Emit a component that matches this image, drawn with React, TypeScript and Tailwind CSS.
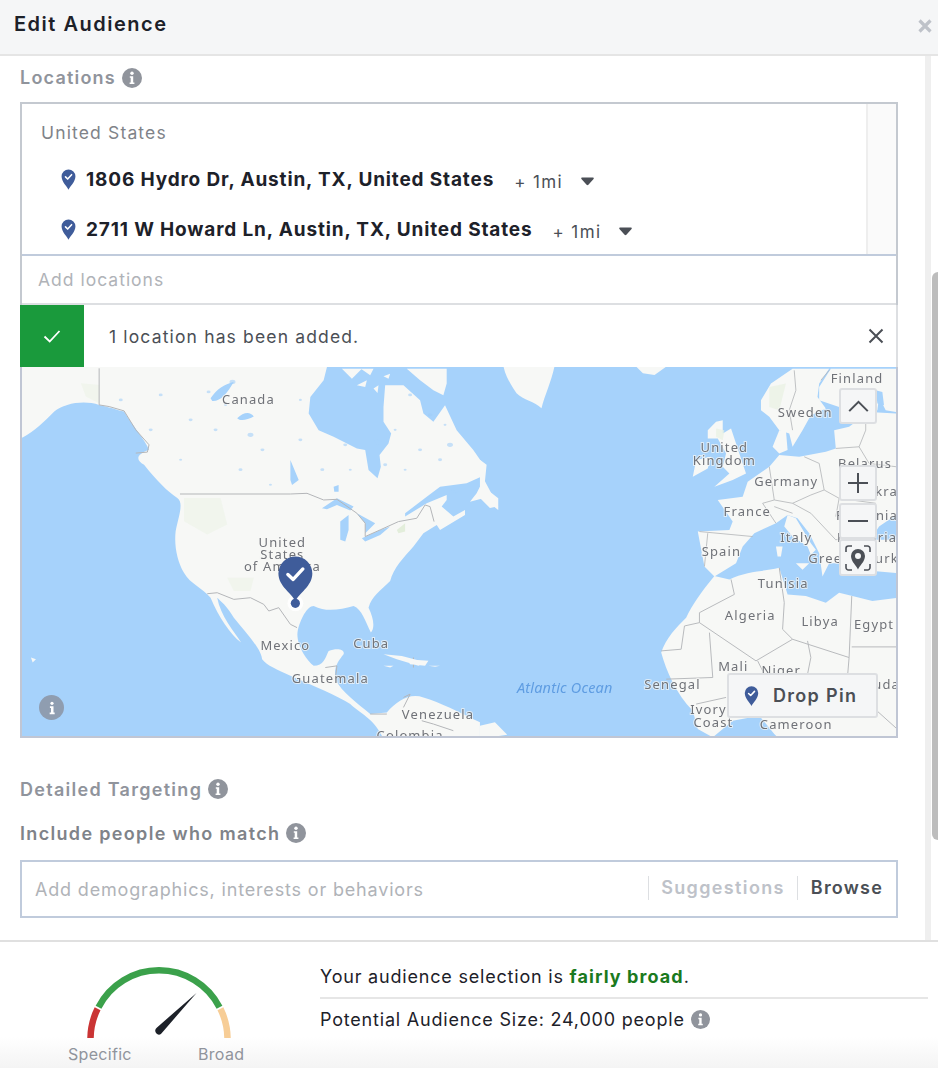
import React from "react";

const font = { fontFamily: "Inter, 'Liberation Sans', sans-serif" };

function Info({ className = "" }: { className?: string }) {
  return (
    <svg viewBox="0 0 20 20" className={className}>
      <circle cx="10" cy="10" r="10" fill="#90949c" />
      <circle cx="10" cy="5.2" r="1.7" fill="#fff" />
      <path d="M7.8 8.2h3.4v6.2h1.2v1.6H7.6v-1.6h1.1V9.8h-.9z" fill="#fff" />
    </svg>
  );
}

function Pin({ className = "" }: { className?: string }) {
  return (
    <svg viewBox="0 0 16 22" className={className}>
      <path d="M8 22C6.6 18.6 0.6 13.6 0.6 7.6A7.4 7.4 0 0 1 15.400 7.6C15.400 13.6 9.4 18.6 8 22Z" fill="#3f5c9a" />
      <path d="M4.8 8.2l2.3 2.3 4.2-4.6" fill="none" stroke="#fff" strokeWidth="1.7" strokeLinecap="round" strokeLinejoin="round" />
    </svg>
  );
}

function Caret() {
  return (
    <svg viewBox="0 0 16 10" className="w-[15px] h-[9px]">
      <path d="M1 1.5C1 .8 1.5.5 2 .5h12c.5 0 1 .3 1 1 0 .4-.2.7-.5 1L9 8.6c-.6.6-1.4.6-2 0L1.5 2.500C1.2 2.200 1 1.900 1 1.500Z" fill="#4b4f56" />
    </svg>
  );
}

function LocationRow({ text, y }: { text: string; y: string }) {
  return (
    <div className={`flex items-center pl-[39px] ${y}`}>
      <Pin className="w-[15px] h-[21px] mr-[10px] -mt-[3px]" />
      <span className="text-[19px] leading-[24px] font-bold text-[#1d2129] tracking-[0.85px] -mt-[3px]">{text}</span>
      <span className="ml-[20px] text-[17px] leading-[24px] text-[#4b4f56] tracking-[1.4px] mt-[1px]">+ 1mi</span>
      <span className="ml-[17px] flex items-center mt-[1px]"><Caret /></span>
    </div>
  );
}

function Label({ x, y, children, size = 13 }: { x: number; y: number; children: string; size?: number }) {
  return (
    <text x={x} y={y} textAnchor="middle" fontSize={size} letterSpacing="1.15" fill="#6f7278" fontFamily="'Noto Sans', sans-serif" stroke="#f8f8f6" strokeOpacity="0.7" strokeWidth="2" paintOrder="stroke">
      {children}
    </text>
  );
}

const lakes: [number, number, number][] = [
  [208, 392, 2], [232, 382, 3], [190, 420, 2], [160, 395, 2], [215, 430, 2], [250, 435, 3], [262, 450, 2],
  [120, 400, 2], [150, 430, 2], [300, 400, 1.5], [300, 440, 2], [322, 470, 2], [350, 470, 1.5], [410, 395, 2],
  [430, 415, 2.500], [395, 430, 1.5], [450, 445, 3], [420, 450, 2], [385, 465, 2], [405, 470, 1.5], [445, 425, 1.5],
  [345, 445, 2], [180, 460, 1.5], [240, 470, 2], [270, 485, 1.5], [440, 460, 2], [225, 405, 1.5],
];

function WorldMap() {
  const land = "#f7f8f6";
  const water = "#a6d2fb";
  const line = "#b4b6b9";
  const blue = "#9fcdf9";
  return (
    <svg viewBox="21 367 876 370" className="absolute inset-0 w-full h-full blur-[0.5px]" preserveAspectRatio="none">
      <rect x="21" y="367" width="876" height="370" fill={water} />
      {/* Americas */}
      <g transform="translate(20 365) scale(0.33333)">
        <path fill={land} d="M0 0L920 0L920 6L910 46L870 96L865 146L895 196L940 216L1010 251L1035 256L1045 316L1072 341L1082 306L1078 271L1105 236L1113 206L1090 171L1090 126L1095 61L1150 61L1200 106L1210 146L1240 171L1275 121L1310 196L1360 256L1395 306L1395 331L1340 356L1260 366L1220 396L1155 446L1155 456L1220 416L1280 391L1280 406L1265 426L1300 456L1335 436L1335 451L1260 496L1250 481L1210 506L1180 546C1150 580 1120 610 1110 650C1080 680 1055 695 1045 730C1060 760 1065 790 1052 805C1035 770 1025 735 1000 725C960 735 920 745 880 725C860 725 840 765 832 800C825 840 860 890 880 905C910 905 915 880 925 860C950 850 975 855 970 870C955 890 940 905 945 945C965 985 1010 1015 1050 1050L1100 1045C1130 1010 1170 985 1210 1000C1260 1015 1320 1045 1380 1075L1380 1125L1090 1125C1060 1060 1020 1050 990 1020C950 995 880 965 810 935C770 915 740 905 725 885C720 850 680 810 640 760C620 725 600 710 590 700C600 755 640 800 662 835C630 810 595 760 570 700C545 670 510 660 490 625C470 590 460 545 465 500C475 450 490 415 470 400C440 380 410 350 370 300C345 285 345 270 385 255C370 220 340 190 310 140C290 135 260 125 235 120C190 105 130 115 100 140C70 170 40 200 5 218L0 218Z" />
        <path fill={water} d="M570 100C590 70 610 60 640 50C620 85 600 110 575 108ZM650 160C670 140 690 140 700 155C680 165 660 170 650 160Z" />
        <path fill="#e8f1e2" opacity="0.45" d="M180 55L235 60L235 115L195 95ZM490 400L600 400L620 480L560 510L490 470ZM620 640L700 640L690 680L640 680Z" />
        <path fill="none" stroke={line} strokeWidth="3" d="M235 10L235 120L265 125L310 138L345 195L385 240L380 262L345 265M478 388L810 388M560 688L590 685L640 705L690 700L730 720L745 740L775 730L810 780L830 790M915 910L950 905L945 945M1150 1000L1170 990L1150 1030M1180 880L1180 910M1205 1070L1240 1080L1300 1100M1050 1050L1100 1050" />
        <path fill={land} d="M1090 870L1145 875L1220 895L1195 905L1130 885ZM1160 885L1225 890L1215 905L1170 900ZM1090 905L1120 905L1110 910ZM1225 905L1260 905L1245 908ZM30 880L45 885L35 895Z" />
      </g>
      {/* Eastern Canada detail */}
      <g transform="translate(290 367) scale(0.33333)">
        <path fill={land} d="M155 5L215 5L185 35ZM212 5L250 5L240 25ZM200 55L230 40L225 60ZM250 65L265 55L262 78ZM280 28L300 20L295 35ZM350 5L470 5L470 50L460 85L430 70L390 40ZM585 330L560 380L540 405L580 395L625 430L625 395L600 375L575 370Z" />
        <path fill={water} d="M95 425L140 395L190 420L180 432L140 415L110 428ZM150 520L150 465L175 445L175 490L165 525ZM200 440L255 470L225 500L225 470ZM215 515L270 490L300 480L270 505L225 525ZM0 280L25 340L5 355L0 340ZM130 360L145 355L145 375L132 375ZM470 365L505 375L495 380ZM250 215L275 225L260 235Z" />
        <path fill="#e3eedb" d="M320 490L345 470L345 495L325 500Z" />
        <path fill="none" stroke={line} strokeWidth="3" d="M0 382L50 380L100 400L140 398L200 440L225 470L225 510L270 490L325 465L380 455L405 415L420 420L432 465" />
      </g>
      {/* Africa */}
      <g transform="translate(480 365) scale(0.33333)">
        <path fill={land} d="M70 0L225 0C215 50 195 90 185 130C165 110 130 105 110 85C90 55 75 30 70 0ZM470 5L560 5L525 30L490 25ZM0 285L20 300L15 350L55 425L30 430L0 400ZM0 1085L45 1075L82 1112L0 1125Z" />
        <path fill={land} d="M705 635C660 690 640 720 620 760C590 790 560 820 545 865C560 920 590 990 640 1040L655 1095L700 1120L760 1070L840 1055L885 1110L900 1125L1260 1125L1260 700L1180 710L1120 695L1080 685L1040 715L980 695L925 690L900 610C860 620 800 620 750 645Z" />
        <path fill="none" stroke={line} strokeWidth="2.8" d="M755 645L765 690L660 745L660 775L830 890L940 825L1110 880L1118 695M660 775L615 785L605 855L545 860M690 805L700 940L560 945M940 825L910 795L915 715L900 610M985 830L995 880L985 930M1118 848L1260 848M1110 880L1100 1000M835 890L850 920M650 1020L740 1000M1160 1010L1260 1100" />
      </g>
      {/* Europe */}
      <g transform="translate(680 367) scale(0.33333)">
        <path fill={land} d="M245 100L275 50L340 5L450 5L420 50L415 90L440 125L395 145L370 190L340 240L330 200L300 190L270 150L245 130Z" />
        <path fill={land} d="M455 5L651 5L651 135L620 130L600 90L595 130L500 170L480 120L420 100L420 60Z" />
        <path fill={land} d="M300 190L320 190L325 250L300 260L280 240Z" />
        <path fill={land} d="M115 400L190 390L205 345L270 300L300 265L360 270L440 255L470 245L465 190L510 180L570 135L651 140L651 445L600 480L575 520L651 520L651 620L540 610L490 590L450 590L430 630L420 560L390 500L355 455L325 445L290 470L225 500L190 540L170 590L105 630L75 600L55 495L150 490L160 465Z" />
        <path fill={land} d="M325 445L350 455L395 530L410 550L395 565L385 540L340 510L315 480Z" />
        <path fill={land} d="M350 590L390 590L370 610ZM290 540L310 540L305 570L295 570ZM85 190L110 165L130 160L130 200L155 185L190 290L200 320L160 340L105 360L150 320L130 300L140 260L115 215L85 215ZM50 280L95 270L85 305L40 330Z" />
        <path fill={water} d="M300 505L330 530L320 540ZM590 70L610 75L615 115L595 110ZM420 190L435 180L425 205Z" />
        <path fill="#e8f1e2" opacity="0.7" d="M270 60L320 50L300 130L270 120ZM110 185L135 190L130 220L110 210Z" />
        <path fill="none" stroke={line} strokeWidth="2.5" d="M345 10L350 70L330 130L340 190M450 10L425 40M270 300L285 400L340 410L395 385L435 370L420 290L375 270M470 245L540 240L560 190L560 135M540 240L570 290L651 300M435 370L480 395L590 410M395 440L470 520L540 500M60 495L220 510M285 420L340 440M75 600L85 500M285 400L250 410L290 470M340 410L395 440M480 395L470 450" />
      </g>
      <g fill={blue} opacity="0.55">
        {lakes.map(([x, y, r], i) => (
          <ellipse key={i} cx={x} cy={y} rx={r} ry={r * 0.7} />
        ))}
      </g>
      <g>
        <Label x={248} y={404}>Canada</Label>
        <Label x={282} y={547}>United</Label>
        <Label x={282} y={560}>States</Label>
        <Label x={282} y={572}>of America</Label>
        <Label x={285} y={651}>Mexico</Label>
        <Label x={371} y={649}>Cuba</Label>
        <Label x={330} y={684}>Guatemala</Label>
        <Label x={438} y={720}>Venezuela</Label>
        <Label x={410} y={741}>Colombia</Label>
        <Label x={858} y={383}>Finland</Label>
        <Label x={806} y={417}>Sweden</Label>
        <Label x={725} y={452}>United</Label>
        <Label x={725} y={465}>Kingdom</Label>
        <Label x={787} y={486}>Germany</Label>
        <Label x={748} y={516}>France</Label>
        <Label x={866} y={468}>Belarus</Label>
        <Label x={889} y={496}>Ukrain</Label>
        <Label x={868} y={520}>Romania</Label>
        <Label x={797} y={542}>Italy</Label>
        <Label x={868} y={542}>Bulgaria</Label>
        <Label x={834} y={564}>Greece</Label>
        <Label x={892} y={564}>Turkey</Label>
        <Label x={722} y={557}>Spain</Label>
        <Label x={784} y={589}>Tunisia</Label>
        <Label x={751} y={621}>Algeria</Label>
        <Label x={821} y={627}>Libya</Label>
        <Label x={875} y={630}>Egypt</Label>
        <Label x={734} y={672}>Mali</Label>
        <Label x={782} y={676}>Niger</Label>
        <Label x={673} y={690}>Senegal</Label>
        <Label x={709} y={715}>Ivory</Label>
        <Label x={714} y={728}>Coast</Label>
        <Label x={797} y={730}>Cameroon</Label>
        <Label x={888} y={690}>Sudan</Label>
        <text x={565} y={694} textAnchor="middle" fontSize={14.5} fontStyle="italic" letterSpacing="0.2" fill="#5f9de2" fontFamily="'Noto Sans', sans-serif">Atlantic Ocean</text>
      </g>
      <circle cx="295" cy="604" r="8" fill="#fff" opacity="0.85" />
      <circle cx="295" cy="604" r="4.6" fill="#3f5c9a" />
      <path d="M295 602C292 594 278 587 278 574A17 17 0 0 1 312 574C312 587 298 594 295 602Z" fill="#3f5c9a" />
      <path d="M287.5 575l5.3 5 9.7-10.5" fill="none" stroke="#fff" strokeWidth="3.4" strokeLinecap="round" strokeLinejoin="round" />
    </svg>
  );
}

function MapBtn({ className, children }: { className: string; children: React.ReactNode }) {
  return (
    <div className={`absolute flex items-center justify-center w-[38px] bg-[#f5f6f7] border-2 border-[#dddfe2] rounded-[3px] ${className}`}>
      {children}
    </div>
  );
}

function Gauge() {
  return (
    <svg viewBox="0 0 160 80" className="w-[160px] h-[80px]">
      <g fill="none" strokeWidth="6.5">
        <path d="M11.5 76A68 68 0 0 1 18.6 46.8" stroke="#ca3434" />
        <path d="M19.5 45.2A68 68 0 0 1 140.5 45.2" stroke="#3ba14b" />
        <path d="M141.4 46.8A68 68 0 0 1 148.5 76" stroke="#f7cd96" />
      </g>
      <path d="M78 65.4L117.5 31 82.4 71.4A3.6 3.6 0 0 1 77.2 71.2 3.9 3.9 0 0 1 78 65.4Z" fill="#1d2129" />
    </svg>
  );
}

export default function App() {
  return (
    <div style={font} className="w-[938px] h-[1068px] overflow-hidden bg-white flex flex-col">
      <header className="h-[56px] shrink-0 bg-[#f5f6f7] border-b-2 border-[#e5e5e5] flex items-center justify-between pl-[14px] pr-[5px]">
        <h1 className="text-[20px] font-semibold text-[#1d2129] tracking-[1.5px] -mt-[6px]">Edit Audience</h1>
        <svg viewBox="0 0 16 16" className="w-[16px] h-[16px] -mt-[3px]">
          <path d="M2.500 2.500l11 11M13.500 2.500l-11 11" stroke="#bec2c9" strokeWidth="3.2" fill="none" />
        </svg>
      </header>

      <div className="h-[884px] shrink-0 flex">
        <main className="w-[925px] shrink-0 pl-[20px] pr-[27px]">
          <div className="h-[46px] flex items-center gap-[6px] pb-[3px]">
            <span className="text-[18px] font-semibold text-[#90949c] tracking-[1.2px]">Locations</span>
            <Info className="w-[20px] h-[20px]" />
          </div>

          <div className="border-x-2 border-t-2 border-[#c4c9d0]">
            <div className="h-[152px] flex border-b-2 border-[#c0cbdc] overflow-hidden">
              <div className="flex-1 min-w-0">
                <div className="pl-[19px] pt-[17px] text-[17.5px] leading-[24px] text-[#7f8389] tracking-[1.15px]">United States</div>
                <LocationRow text="1806 Hydro Dr, Austin, TX, United States" y="mt-[23px] h-[26px]" />
                <LocationRow text="2711 W Howard Ln, Austin, TX, United States" y="mt-[24px] h-[26px]" />
              </div>
              <div className="w-[30px] shrink-0 bg-[#fafafa] border-l-2 border-[#eeeeee]" />
            </div>
            <div className="h-[49px] flex items-center pl-[16px] pt-[2px] text-[17.5px] tracking-[1px] text-[#b0b3b8] border-b-2 border-[#dddfe2]">Add locations</div>
          </div>

          <div className="h-[62px] flex items-center border-r-2 border-[#dddfe2]">
            <div className="w-[64px] h-full shrink-0 bg-[#1a9a3c] flex items-center justify-center">
              <svg viewBox="0 0 20 20" className="w-[20px] h-[20px]">
                <path d="M2.500 10.500l5.200 5L17.500 5" fill="none" stroke="#fff" strokeWidth="1.8" />
              </svg>
            </div>
            <span className="ml-[25px] flex-1 text-[17.5px] tracking-[1.15px] text-[#4b4f56] mt-[3px]">1 location has been added.</span>
            <svg viewBox="0 0 16 16" className="w-[16px] h-[16px] mr-[12px]">
              <path d="M1.500 1.500l13 13M14.500 1.500l-13 13" stroke="#4b4f56" strokeWidth="2" fill="none" />
            </svg>
          </div>

          <div className="relative h-[371px] border-x-2 border-b-2 border-[#c0c6d4] box-border overflow-hidden">
            <WorldMap />
            <div className="absolute left-[17px] top-[328px] w-[25px] h-[25px] rounded-full bg-[#8f9db0] flex items-center justify-center">
              <svg viewBox="0 0 12 16" className="w-[10px] h-[14px]">
                <circle cx="6" cy="2.400" r="1.900" fill="#fff" />
                <path d="M3.500 6h4.300v7.500h1.400V15.500H3.200v-2h1.600V8H3.500Z" fill="#fff" />
              </svg>
            </div>
            <MapBtn className="left-[817px] top-[21px] h-[36px]">
              <svg viewBox="0 0 24 14" className="w-[23px] h-[13px]"><path d="M2 12L12 2l10 10" fill="none" stroke="#4b4f56" strokeWidth="2.200" /></svg>
            </MapBtn>
            <MapBtn className="left-[817px] top-[98px] h-[36px]">
              <svg viewBox="0 0 20 20" className="w-[20px] h-[20px]"><path d="M10 0v20M0 10h20" stroke="#4b4f56" strokeWidth="2" fill="none" /></svg>
            </MapBtn>
            <MapBtn className="left-[817px] top-[136px] h-[36px]">
              <svg viewBox="0 0 20 4" className="w-[20px] h-[4px]"><path d="M0 2h20" stroke="#4b4f56" strokeWidth="2" /></svg>
            </MapBtn>
            <MapBtn className="left-[817px] top-[172px] h-[37px]">
              <svg viewBox="0 0 28 28" className="w-[28px] h-[28px]">
                <path d="M2 8V4.500A2.500 2.500 0 0 1 4.500 2H8M20 2h3.500A2.500 2.500 0 0 1 26 4.500V8M26 20v3.500a2.500 2.500 0 0 1-2.500 2.500H20M8 26H4.500A2.500 2.500 0 0 1 2 23.500V20" fill="none" stroke="#4b4f56" strokeWidth="1.600" />
                <path fillRule="evenodd" d="M14 25.500C12.800 22 7 17.800 7 12a7 7 0 0 1 14 0C21 17.800 15.200 22 14 25.500ZM14 9a3 3 0 1 0 0 6 3 3 0 0 0 0-6Z" fill="#4b4f56" />
              </svg>
            </MapBtn>
            <div className="absolute left-[705px] top-[306px] w-[151px] h-[45px] bg-[#f5f6f7] border-2 border-[#dddfe2] rounded-[3px] flex items-center pl-[15px]">
              <Pin className="w-[15px] h-[20px]" />
              <span className="ml-[14px] text-[18px] font-semibold tracking-[1.3px] text-[#4b4f56]">Drop Pin</span>
            </div>
          </div>

          <div className="mt-[39px] h-[24px] flex items-center gap-[6px]">
            <span className="text-[18px] font-semibold text-[#90949c] tracking-[1.28px]">Detailed Targeting</span>
            <Info className="w-[20px] h-[20px]" />
          </div>
          <div className="mt-[20px] h-[24px] flex items-center gap-[6px]">
            <span className="text-[18px] font-semibold text-[#7f8389] tracking-[1.33px]">Include people who match</span>
            <Info className="w-[20px] h-[20px]" />
          </div>
          <div className="mt-[15px] h-[58px] border-2 border-[#c0cbdc] flex items-center pl-[13px] pr-[13px]">
            <span className="flex-1 text-[18px] tracking-[0.83px] text-[#b0b3b8]">Add demographics, interests or behaviors</span>
            <span className="border-l border-[#dddfe2] pl-[12px] h-[24px] leading-[24px] text-[18px] font-semibold tracking-[1.36px] text-[#bec2c9] -mt-[3px]">Suggestions</span>
            <span className="ml-[12px] border-l border-[#dddfe2] pl-[13px] h-[24px] leading-[24px] text-[18px] font-semibold tracking-[1.2px] text-[#4b4f56] -mt-[3px]">Browse</span>
          </div>
        </main>
        <aside className="flex-1 flex border-l-[6px] border-[#efefef] bg-white">
          <div className="flex-1 mt-[216px] h-[568px] ml-[1px] bg-[#bdbdbd] rounded-tl-[6px] rounded-bl-[6px]" />
        </aside>
      </div>

      <footer className="flex-1 border-t-2 border-[#e0e0e0] bg-gradient-to-b from-white from-75% to-[#f4f4f4] flex">
        <div className="w-[320px] shrink-0 pl-[79px] pt-[20px]">
          <Gauge />
          <div className="relative h-[24px]">
            <span className="absolute left-[-11px] top-[0px] text-[16px] tracking-[0.3px] text-[#90949c]">Specific</span>
            <span className="absolute left-[119px] top-[0px] text-[16px] tracking-[0.3px] text-[#90949c]">Broad</span>
          </div>
        </div>
        <div className="w-[608px] pt-[21px] text-[18px] tracking-[0.8px] text-[#1d2129]">
          <div className="h-[36px] border-b-2 border-[#e6e6e6]">
            Your audience selection is <span className="font-bold text-[#1a7a1e] tracking-[1.08px]">fairly broad</span>.
          </div>
          <div className="mt-[7px] flex items-center gap-[6px]">
            Potential Audience Size: 24,000 people
            <Info className="w-[19px] h-[19px]" />
          </div>
        </div>
      </footer>
    </div>
  );
}
